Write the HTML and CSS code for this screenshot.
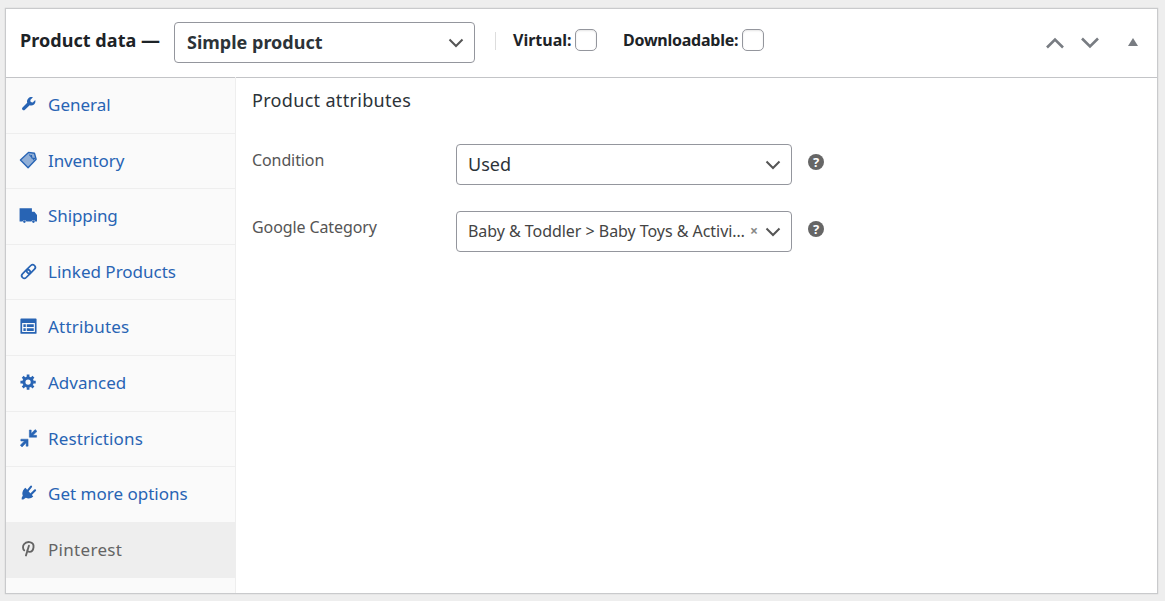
FILE: index.html
```html
<!DOCTYPE html>
<html lang="en">
<head>
<meta charset="utf-8">
<title>Product data</title>
<link rel="stylesheet" href="styles.css">
</head>
<body>
<section class="panel">
  <header class="head">
    <h2 class="title">Product data <span class="dash">—</span></h2>
    <div class="select type"><span class="type-text">Simple product</span>
      <svg class="chev" viewBox="0 0 16 10"><path d="M1.500 1.500 8 8l6.500-6.500"/></svg></div>
    <span class="divider"></span>
    <label class="check virtual"><span>Virtual:</span><i class="box"></i></label>
    <label class="check download"><span>Downloadable:</span><i class="box"></i></label>
    <div class="handles">
      <svg class="order" viewBox="0 0 20 12"><path d="M2 10.500 10 2.500l8 8"/></svg>
      <svg class="order" viewBox="0 0 20 12"><path d="M2 1.500 10 9.500l8-8"/></svg>
      <svg class="toggle" viewBox="0 0 10 8"><path d="M0 8 5 0l5 8z"/></svg>
    </div>
  </header>
  <div class="main">
    <ul class="tabs">
      <li><svg viewBox="0 0 20 20"><path fill="currentColor" d="M17.400 5.600c.6 1.900.1 4-1.400 5.400-1.500 1.300-3.400 1.600-5.100 1l-5.600 5.300c-.8.8-2 .8-2.800 0s-.8-2 0-2.800L8 9c-.6-1.700-.2-3.700 1.200-5.100 1.500-1.500 3.600-2 5.500-1.300l-3.100 3 .5 2.400 2.400.6z" transform="translate(.5 -1)"/></svg><span class="t-general">General</span></li>
      <li><svg viewBox="0 0 20 20"><path fill="currentColor" fill-opacity=".5" stroke="currentColor" stroke-width="1.600" stroke-linejoin="round" d="M.5 9.500 10 .5l7 1 2 7-9.500 10z"/><path d="m11 3 6 7M13.500 3.500l.5 3.500 4 .5" fill="none" stroke="currentColor" stroke-width="1.200"/></svg><span class="t-inventory">Inventory</span></li>
      <li><svg viewBox="0 0 20 20"><path fill="currentColor" d="M-.5 1.500H14v4h3l3 4V17h-2a2.300 2.300 0 0 0-4.500 0H7.500a2.300 2.300 0 0 0-4.500 0H-.5z"/><circle cx="5.200" cy="17.200" r="1.500" fill="currentColor"/><circle cx="15.800" cy="17.200" r="1.500" fill="currentColor"/></svg><span class="t-shipping">Shipping</span></li>
      <li><svg viewBox="0 0 20 20"><g fill="none" stroke="currentColor" stroke-width="2" transform="rotate(-45 10 10)"><rect x="0" y="6.900" width="11.800" height="6.200" rx="3.100"/><rect x="8.200" y="6.900" width="11.800" height="6.200" rx="3.100"/></g></svg><span class="t-linked">Linked Products</span></li>
      <li><svg viewBox="0 0 20 20"><path fill="currentColor" fill-rule="evenodd" d="M1.500.5h17q1 0 1 1v16q0 1-1 1h-17q-1 0-1-1v-16q0-1 1-1zM2.500 6v10.500h15V6z"/><path fill="currentColor" d="M4 7.300h2.800v3.300H4zM4 12h2.800v3.200H4zM8 7.300h8.200v3.300H8zM8 12h8.200v3.200H8z"/></svg><span class="t-attributes">Attributes</span></li>
      <li><svg viewBox="0 0 20 20"><circle cx="9.500" cy="9.500" r="4.900" fill="none" stroke="currentColor" stroke-width="3.600"/><path stroke="currentColor" stroke-width="3.200" d="M9.500.500v3m0 12v3m-9-9h3m12 0h3M3.200 3.200l2 2m8.600 8.600 2 2m0-12.600-2 2m-8.600 8.600-2 2"/></svg><span class="t-advanced">Advanced</span></li>
      <li><svg viewBox="0 0 20 20"><path fill="currentColor" stroke="currentColor" stroke-width=".6" d="M11 0v8.500h8.500V6.300h-4.200L20 1.600 17.800-.5l-4.600 4.700V0zM1 10.800V13h4.200L.3 17.800 2.400 20l4.800-4.900V19h2.300v-8.200z"/></svg><span class="t-restrictions">Restrictions</span></li>
      <li><svg viewBox="0 0 20 20"><path fill="currentColor" d="M6.300 3.200 15.600 13.500c-2 2.200-6 3.100-8.700 1.500l-3 2H2v-2l1.300-2.600C1.900 9.500 3.500 5.300 6.300 3.200z"/><path d="m9 7 4-5M13 11l4.700-4.800" stroke="currentColor" stroke-width="2.500" stroke-linecap="round"/></svg><span class="t-options">Get more options</span></li>
      <li class="active"><svg viewBox="0 0 20 20"><path fill="none" stroke="currentColor" stroke-width="2.200" stroke-linecap="round" d="M5 11C3.200 9.500 3 6 4.700 3.800 6.500 1.500 9 1 11.300 1.300c3.200.5 5 3 4.600 6.200-.4 3-2.200 5.300-4.700 5.300-1.500 0-2.500-.8-2.700-1.800M10.500 5.500 7 17"/></svg><span class="t-pinterest">Pinterest</span></li>
    </ul>
    <div class="content">
      <h3 class="subtitle">Product attributes</h3>
      <div class="field">
        <span class="label l-cond">Condition</span>
        <div class="select"><span class="used">Used</span>
          <svg class="chev" viewBox="0 0 16 10"><path d="M1.500 1.500 8 8l6.500-6.500"/></svg></div>
        <span class="help">?</span>
      </div>
      <div class="field">
        <span class="label l-cat">Google Category</span>
        <div class="select cat"><span class="value">Baby &amp; Toddler &gt; Baby Toys &amp; Activi…</span><b class="clear">×</b>
          <svg class="chev" viewBox="0 0 16 10"><path d="M1.500 1.500 8 8l6.500-6.500"/></svg></div>
        <span class="help">?</span>
      </div>
    </div>
  </div>
</section>
</body>
</html>
```
FILE: styles.css
```css
* { box-sizing: border-box; }
body { margin: 0; padding: 8px 7px 7px 5px; height: 601px; background: #eee; font-family: "Noto Sans", sans-serif; color: #2c3338; overflow: hidden; }
span { white-space: nowrap; }
.panel { height: 586px; display: flex; flex-direction: column; background: #fff; border: 1px solid #c9cacc; box-shadow: 0 0 1px #bbb; }
.head { height: 69px; flex: none; display: flex; align-items: flex-start; border-bottom: 1px solid #c3c4c7; padding-left: 14px; }
.title { margin: 19px 0 0; width: 154px; font-size: 18px; line-height: 24px; font-weight: 700; color: #1d2327; white-space: nowrap; letter-spacing: .05px; }
.dash { font-size: 19px; }
.select { height: 41px; width: 336px; flex: none; border: 1px solid #94969d; border-radius: 4px; background: #fff; display: flex; align-items: center; padding: 0 10px 2px 11px; }
.chev { width: 16px; height: 10px; margin: 2px 0 0 auto; flex: none; fill: none; stroke: #555; stroke-width: 2; }
.type { width: 301px; margin-top: 13px; padding-left: 12px; font-size: 18px; font-weight: 700; }
.divider { width: 1px; height: 18px; background: #ddd; margin: 23px 17px 0 20px; }
.check { display: flex; font-size: 16px; font-weight: 700; line-height: 24px; margin-top: 19px; color: #1d2327; }
.virtual { width: 110px; }
.check span { width: 62px; }
.check.download span { width: 119px; letter-spacing: -.25px; }
.box { width: 22px; height: 22px; border: 1px solid #94969d; border-radius: 5px; box-shadow: inset 0 1px 2px #e5e5e5; margin-top: 1px; }
.handles { margin: 26px 19px 0 auto; display: flex; gap: 15px; align-items: center; height: 16px; }
.order { width: 20px; height: 12px; fill: none; stroke: #787c82; stroke-width: 2.6; }
.toggle { width: 10px; height: 8px; fill: #787c82; margin: -3px 0 0 13px; }
.main { flex: 1; min-height: 0; display: flex; }
.tabs { width: 230px; margin: -1px 0 0; padding: 1px 0 0; list-style: none; background: #fafafa; background-clip: content-box; border-right: 1px solid #eee; color: #2864b4; }
.tabs li { height: 55.6px; border-bottom: 1px solid #eee; display: flex; align-items: flex-start; padding: 15px 0 0 14px; font-size: 17px; line-height: 24px; }
.tabs svg { width: 17px; height: 17px; margin: 3px 11px 0 0; flex: none; overflow: visible; }
.tabs .active { background: #eee; color: #646464; }
.t-attributes { letter-spacing: .2px; }
.t-inventory, .t-shipping { letter-spacing: -.1px; }
.t-restrictions { letter-spacing: .12px; }
.t-pinterest { letter-spacing: .3px; }
.content { padding: 10px 0 0 16px; }
.subtitle { margin: 0 0 32px; font-size: 18px; line-height: 24px; font-weight: 400; letter-spacing: .32px; }
.field { display: flex; height: 41px; margin-bottom: 26px; }
.label { width: 204px; font-size: 16px; line-height: 24px; margin-top: 4px; color: #555; letter-spacing: -.1px; }
.used { font-size: 18px; }
.value { font-size: 16px; color: #444; letter-spacing: -.04px; }
.clear { font-size: 14px; color: #888; margin-left: auto; }
.cat .chev { margin-left: 7px; }
.help { width: 16px; height: 16px; margin: 10px 0 0 16px; border-radius: 50%; background: #666; color: #fff; font-size: 13px; font-weight: 700; line-height: 16px; text-align: center; }
```
